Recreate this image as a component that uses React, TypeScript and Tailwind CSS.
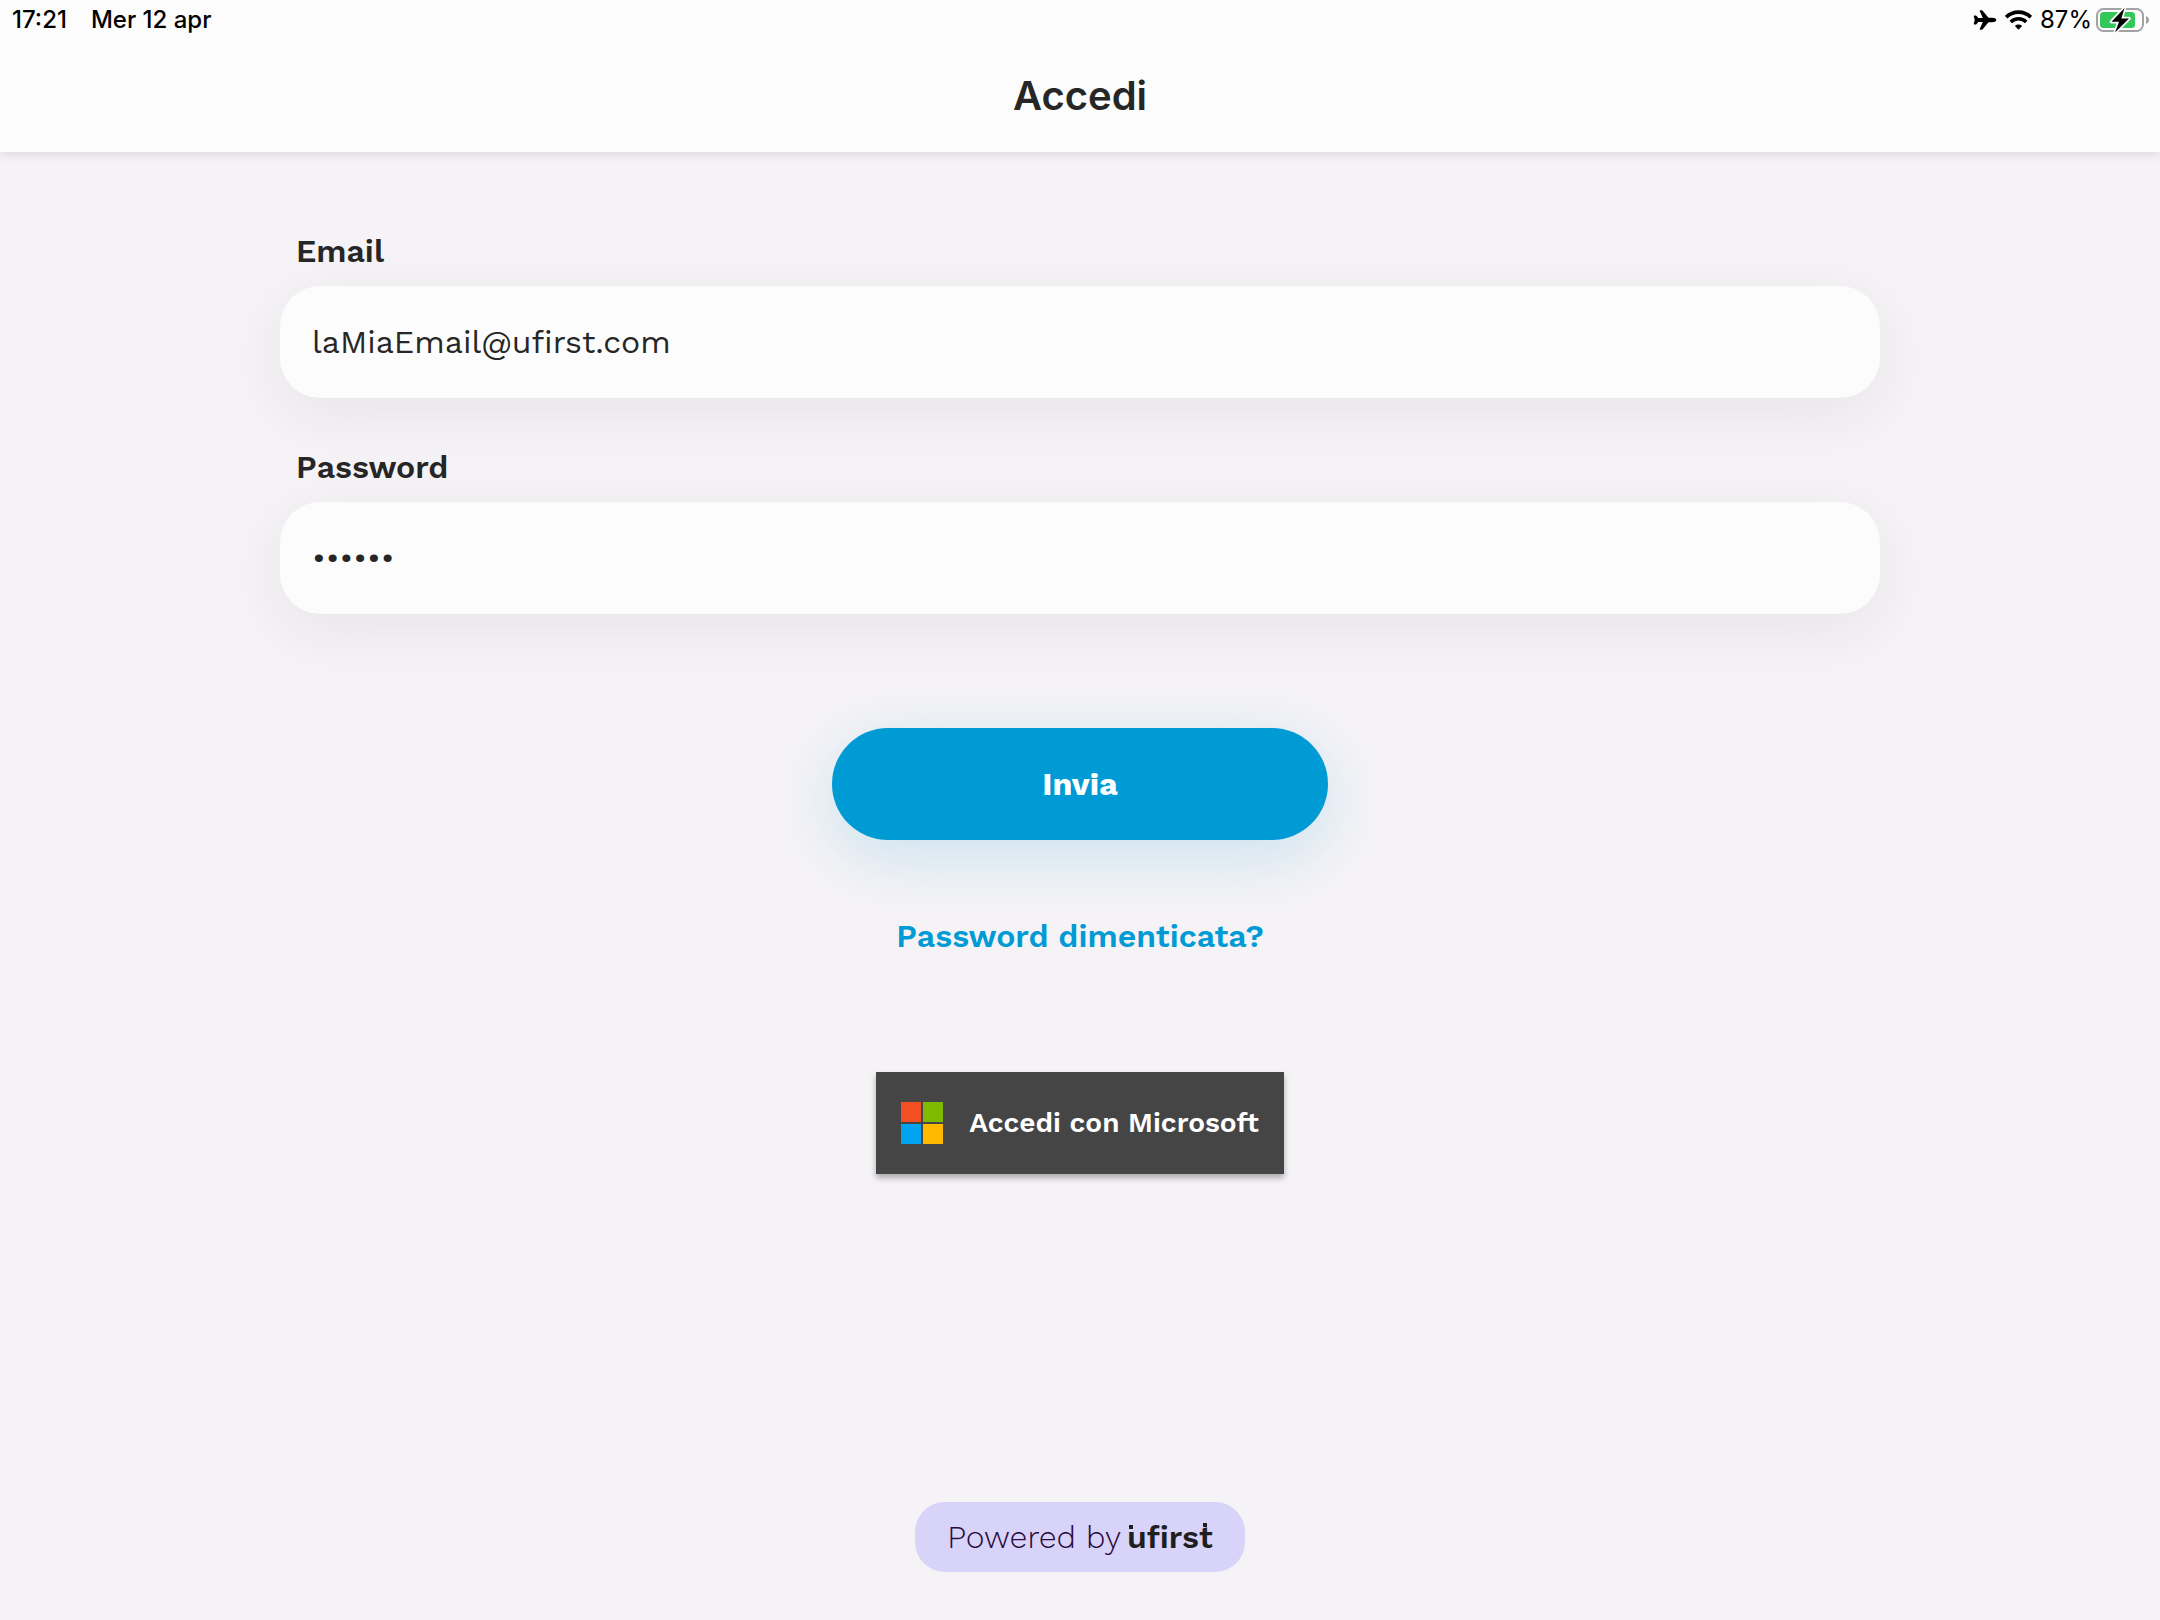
import { useState, type FormEvent } from 'react'
import { IoAirplane } from 'react-icons/io5'

function WifiIcon() {
  return (
    <svg viewBox="0 0 27 20" className="w-[27px] h-5" aria-hidden="true">
      <g fill="none" stroke="#000" strokeWidth="3.6">
        <path d="M1.2 7.2a17.4 17.4 0 0 1 24.6 0" />
        <path d="M5.8 12a10.9 10.9 0 0 1 15.4 0" />
      </g>
      <path d="M13.5 19.8l-3.6-3.7a5.1 5.1 0 0 1 7.2 0z" fill="#000" />
    </svg>
  )
}

function BatteryIcon() {
  return (
    <svg viewBox="0 0 54 26" className="w-[54px] h-[26px]" aria-hidden="true">
      <rect x="1" y="2" width="46" height="22" rx="6.5" fill="none" stroke="#a3a3a3" strokeWidth="2" />
      <path d="M50 9c2 .7 3 2.2 3 4s-1 3.3-3 4z" fill="#a3a3a3" />
      <rect x="4" y="5" width="35" height="16" rx="3.5" fill="#34c759" />
      <path
        d="M28.5 1L15.5 14.8h7.5L19 25.5l14-14h-7.6z"
        fill="#000"
        stroke="#fcfcfc"
        strokeWidth="3.5"
        strokeLinejoin="round"
        paintOrder="stroke"
      />
    </svg>
  )
}

function MicrosoftLogo() {
  return (
    <svg viewBox="0 0 42 42" className="w-[42px] h-[42px]" aria-hidden="true">
      <rect width="20" height="20" fill="#f25022" />
      <rect x="22" width="20" height="20" fill="#7fba00" />
      <rect y="22" width="20" height="20" fill="#00a4ef" />
      <rect x="22" y="22" width="20" height="20" fill="#ffb900" />
    </svg>
  )
}

function StatusBar() {
  return (
    <div className="flex items-center justify-between h-10 pl-3 pr-2.5 font-[Inter,sans-serif] text-2xl text-black">
      <div className="flex items-center gap-6 font-medium">
        <span>17:21</span>
        <span>Mer 12 apr</span>
      </div>
      <div className="flex items-center gap-2">
        <IoAirplane className="w-6 h-6" />
        <WifiIcon />
        <div className="flex items-center gap-1">
          <span>87%</span>
          <BatteryIcon />
        </div>
      </div>
    </div>
  )
}

const inputClass =
  'block w-full h-28 px-8 rounded-[40px] bg-[#fcfcfc] text-[32px] text-[#262626] shadow-[0_16px_64px_rgba(38,38,38,0.07)] outline-none'

export default function App() {
  const [email, setEmail] = useState('laMiaEmail@ufirst.com')
  const [password, setPassword] = useState('secret')

  const handleSubmit = (e: FormEvent) => {
    e.preventDefault()
  }

  return (
    <div className="min-h-screen flex flex-col bg-[#f5f3f6] font-['Work_Sans',Inter,sans-serif] text-[#262626]">
      {/* Header */}
      <header className="bg-[#fcfcfc] shadow-[0_2px_10px_rgba(0,0,0,0.12)]">
        <StatusBar />
        <h1 className="h-28 flex items-center justify-center font-[Inter,sans-serif] text-[40px] font-semibold">
          Accedi
        </h1>
      </header>

      <main className="flex-1 flex flex-col items-center px-8 pt-20 pb-12">
        <form onSubmit={handleSubmit} className="w-full max-w-[1600px] flex flex-col items-center">
          <div className="w-full">
            <label htmlFor="email" className="block px-4 mb-4 text-[32px] leading-[38px] font-semibold">
              Email
            </label>
            <input
              id="email"
              type="email"
              value={email}
              onChange={(e) => setEmail(e.target.value)}
              className={inputClass}
            />
          </div>
          <div className="w-full mt-[50px]">
            <label htmlFor="password" className="block px-4 mb-4 text-[32px] leading-[38px] font-semibold">
              Password
            </label>
            <input
              id="password"
              type="password"
              value={password}
              onChange={(e) => setPassword(e.target.value)}
              className={inputClass}
            />
          </div>
          <button
            type="submit"
            className="mt-[114px] w-full max-w-[496px] h-28 rounded-full bg-[#009bd5] text-[32px] font-bold text-white shadow-[0_16px_64px_rgba(0,155,213,0.18)]"
          >
            Invia
          </button>
        </form>

        <a href="#" className="mt-[77px] text-[32px] leading-[38px] font-semibold text-[#009bd5]">
          Password dimenticata?
        </a>

        <button
          type="button"
          className="mt-[117px] flex items-center gap-[26px] h-[102px] px-[25px] bg-[#454545] text-[28px] font-semibold text-white shadow-[0_4px_6px_rgba(0,0,0,0.3)]"
        >
          <MicrosoftLogo />
          Accedi con Microsoft
        </button>

        {/* Powered by */}
        <div className="mt-auto flex items-center gap-1.5 h-[70px] px-8 rounded-[30px] bg-[#d8d3f9] text-[32px]">
          <span className="font-light text-[#2b0a3d]">Powered by</span>
          <span className="relative font-semibold text-[#1f1f1f]">
            ufirst
            <span className="absolute left-0.5 top-3 w-1 h-1 bg-[#1f1f1f]" />
            <span className="absolute right-1.5 top-2.5 w-1 h-1 bg-[#1f1f1f]" />
          </span>
        </div>
      </main>
    </div>
  )
}
